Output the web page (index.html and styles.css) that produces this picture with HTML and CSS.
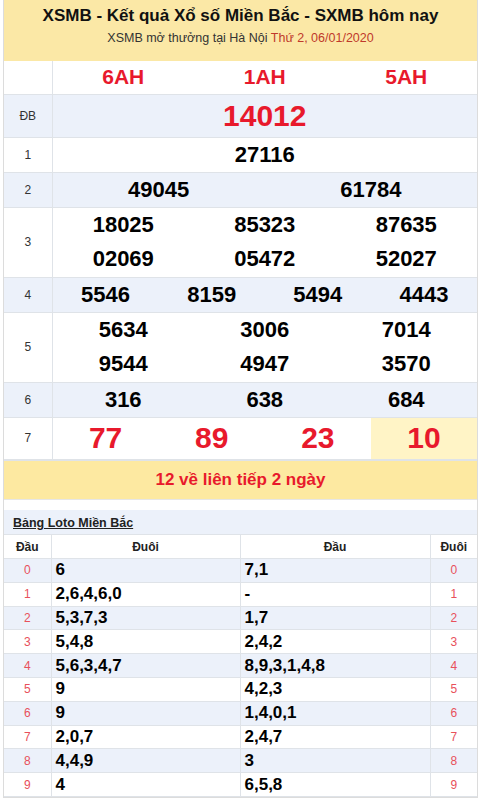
FILE: index.html
```html
<!DOCTYPE html>
<html lang="vi">
<head>
<meta charset="utf-8">
<title>XSMB</title>
<link rel="stylesheet" href="styles.css">
</head>
<body>
<div class="box">
  <div class="header">
    <h1 class="title">XSMB - Kết quả Xổ số Miền Bắc - SXMB hôm nay</h1>
    <div class="sub">XSMB mở thưởng tại Hà Nội <span class="date">Thứ 2, 06/01/2020</span></div>
  </div>
  <table class="kq">
    <colgroup><col class="c-lbl"><col></colgroup>
    <tr class="r-code">
      <td class="lbl"></td>
      <td><div class="g3 codes"><span>6AH</span><span>1AH</span><span>5AH</span></div></td>
    </tr>
    <tr class="alt r-db">
      <td class="lbl">ĐB</td>
      <td><div class="g1 db"><span>14012</span></div></td>
    </tr>
    <tr class="r-n">
      <td class="lbl">1</td>
      <td><div class="g1 num"><span>27116</span></div></td>
    </tr>
    <tr class="alt r-n">
      <td class="lbl">2</td>
      <td><div class="g2 num"><span>49045</span><span>61784</span></div></td>
    </tr>
    <tr class="r-2">
      <td class="lbl">3</td>
      <td><div class="g3 num two"><span>18025</span><span>85323</span><span>87635</span><span>02069</span><span>05472</span><span>52027</span></div></td>
    </tr>
    <tr class="alt r-n">
      <td class="lbl">4</td>
      <td><div class="g4 num"><span>5546</span><span>8159</span><span>5494</span><span>4443</span></div></td>
    </tr>
    <tr class="r-2">
      <td class="lbl">5</td>
      <td><div class="g3 num two"><span>5634</span><span>3006</span><span>7014</span><span>9544</span><span>4947</span><span>3570</span></div></td>
    </tr>
    <tr class="alt r-6">
      <td class="lbl">6</td>
      <td><div class="g3 num"><span>316</span><span>638</span><span>684</span></div></td>
    </tr>
    <tr class="r-7">
      <td class="lbl">7</td>
      <td><div class="g4 big"><span>77</span><span>89</span><span>23</span><span class="hl">10</span></div></td>
    </tr>
  </table>
  <div class="banner">12 về liên tiếp 2 ngày</div>
  <div class="gap"></div>
  <table class="loto">
    <colgroup><col class="lc1"><col class="lc2"><col class="lc3"><col class="lc4"></colgroup>
    <tr class="alt ltitle"><td colspan="4"><a class="lt">Bảng Loto Miền Bắc</a></td></tr>
    <tr class="lhead"><th>Đầu</th><th>Đuôi</th><th>Đầu</th><th>Đuôi</th></tr>
    <tr class="alt"><td class="d">0</td><td class="v">6</td><td class="v">7,1</td><td class="d">0</td></tr>
    <tr><td class="d">1</td><td class="v">2,6,4,6,0</td><td class="v">-</td><td class="d">1</td></tr>
    <tr class="alt"><td class="d">2</td><td class="v">5,3,7,3</td><td class="v">1,7</td><td class="d">2</td></tr>
    <tr><td class="d">3</td><td class="v">5,4,8</td><td class="v">2,4,2</td><td class="d">3</td></tr>
    <tr class="alt"><td class="d">4</td><td class="v">5,6,3,4,7</td><td class="v">8,9,3,1,4,8</td><td class="d">4</td></tr>
    <tr><td class="d">5</td><td class="v">9</td><td class="v">4,2,3</td><td class="d">5</td></tr>
    <tr class="alt"><td class="d">6</td><td class="v">9</td><td class="v">1,4,0,1</td><td class="d">6</td></tr>
    <tr><td class="d">7</td><td class="v">2,0,7</td><td class="v">2,4,7</td><td class="d">7</td></tr>
    <tr class="alt"><td class="d">8</td><td class="v">4,4,9</td><td class="v">3</td><td class="d">8</td></tr>
    <tr><td class="d">9</td><td class="v">4</td><td class="v">6,5,8</td><td class="d">9</td></tr>
  </table>
</div>
</body>
</html>
```
FILE: styles.css
```css
* { box-sizing: border-box; }
html, body { margin: 0; padding: 0; background: #fff; }
body { font-family: "Liberation Sans", Arial, sans-serif; color: #000; }

.box {
  margin: 0 2px 0 3px;
  border: 1px solid #dcdcdc;
  border-top: none;
}

.header {
  background: #fbe8a6;
  height: 61px;
  text-align: center;
  padding-top: 5px;
}
.title {
  margin: 0;
  font-size: 17px;
  line-height: 22px;
  font-weight: bold;
  color: #111;
}
.sub {
  margin-top: 3px;
  font-size: 12.5px;
  line-height: 16px;
  color: #333;
}
.date { color: #c0392b; }

table { border-collapse: collapse; width: 100%; table-layout: fixed; }
td, th { padding: 0; border: 1px solid #dfe3e8; }
.kq tr:first-child td { border-top: none; }
.kq td:first-child, .loto td:first-child, .loto th:first-child { border-left: none; }
.kq td:last-child, .loto td:last-child, .loto th:last-child { border-right: none; }
.c-lbl { width: 48px; }
.alt { background: #ecf1fa; }

.lbl { text-align: center; font-size: 12px; color: #333; }

.r-code { height: 33px; }
.r-db { height: 43px; }
.r-n { height: 35px; }
.r-2 { height: 70px; }
.r-6 { height: 35px; }
.r-7 { height: 42px; }

.g1, .g2, .g3, .g4 { display: grid; align-items: center; justify-items: center; height: 100%; }
.g2 { grid-template-columns: 1fr 1fr; }
.g3 { grid-template-columns: 1fr 1fr 1fr; }
.g4 { grid-template-columns: 1fr 1fr 1fr 1fr; }
.two { grid-auto-rows: 34px; }

.codes { font-size: 21px; color: #e8192c; font-weight: bold; }
.db { font-size: 30px; font-weight: bold; color: #e8192c; }
.num { font-size: 22px; font-weight: bold; }
.big { font-size: 30px; font-weight: bold; color: #e8192c; height: 41px; }
.big span { display: flex; align-items: center; justify-content: center; width: 100%; height: 100%; }
.big .hl { background: #fff4c6; }

.banner {
  background: #fde9a1;
  height: 39px;
  border-top: 1px solid #dfe3e8;
  display: flex;
  align-items: center;
  justify-content: center;
  font-size: 17px;
  font-weight: bold;
  color: #e8192c;
}
.gap { height: 11px; border-top: 1px solid #e6e6e6; }

.lc1 { width: 47px; }
.lc2 { width: 189px; }
.lc3 { width: 190px; }
.lc4 { width: 47px; }
.ltitle td { padding-left: 9px; border-top: none; }
.lt { font-size: 12.5px; font-weight: bold; color: #222; text-decoration: underline; }
.lhead th { font-size: 12px; font-weight: bold; color: #222; }
.loto tr { height: 23.8px; }
.loto .ltitle { height: 25px; }
.loto .lhead { height: 24px; }
.d { text-align: center; font-size: 12px; color: #e8505b; }
.v { padding-left: 4px; font-size: 17px; font-weight: bold; }
```
